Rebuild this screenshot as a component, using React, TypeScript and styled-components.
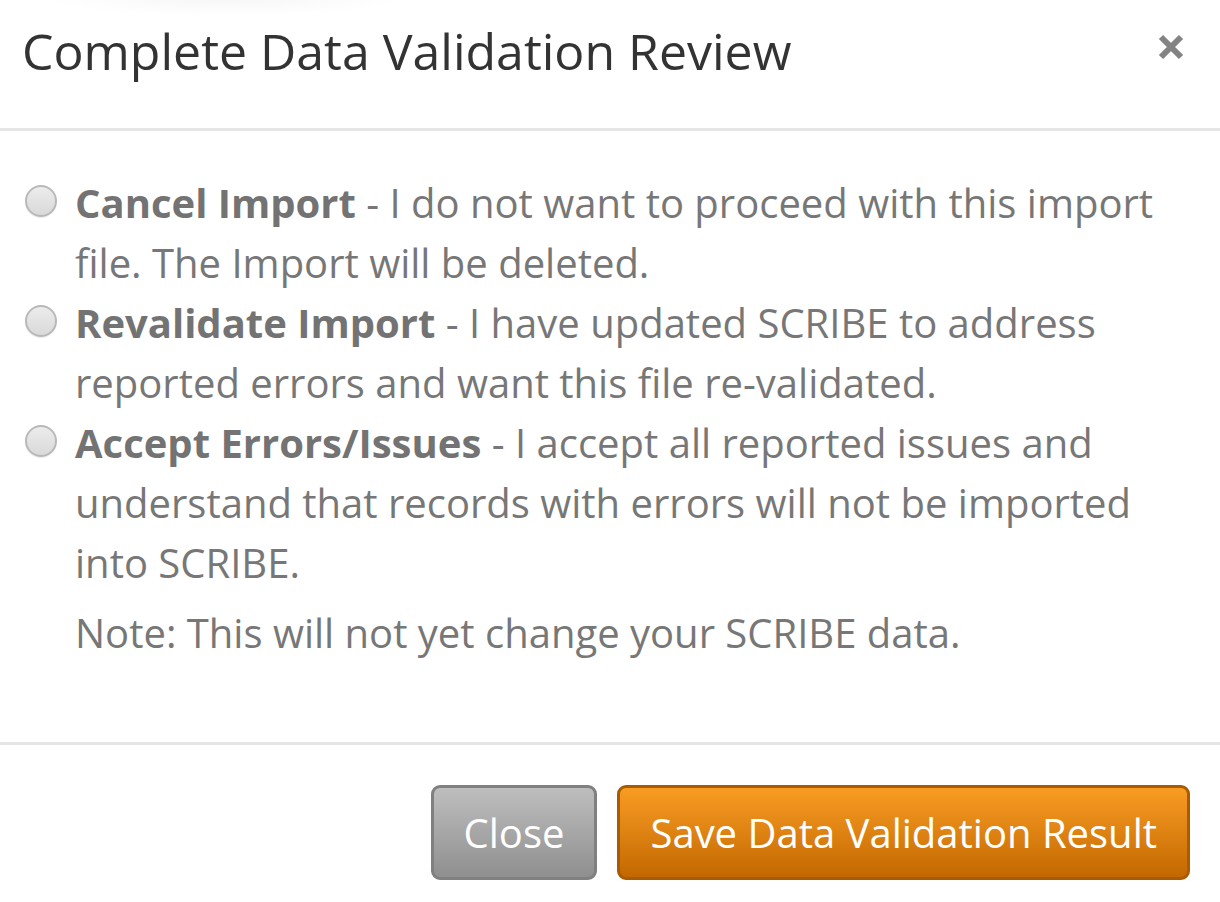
import React from 'react';
import styled, { createGlobalStyle } from 'styled-components';

const GlobalStyle = createGlobalStyle`
  html, body {
    margin: 0;
    padding: 0;
    background: #ffffff;
  }
  body {
    font-family: "Open Sans", "Liberation Sans", Arial, sans-serif;
    overflow: hidden;
  }
`;

const Modal = styled.div`
  width: 1220px;
  height: 902px;
  background: #fff;
  display: flex;
  flex-direction: column;
`;

// header with the title and the close cross
const Header = styled.div`
  position: relative;
  display: flex;
  justify-content: space-between;
  align-items: flex-start;
  padding: 24px 35px 49px 22px;
  border-bottom: 3px solid #e5e5e5;
  &:before {
    content: '';
    position: absolute;
    left: 40px;
    top: -20px;
    width: 370px;
    height: 36px;
    border-radius: 50%;
    background: radial-gradient(ellipse at center, rgba(0, 0, 0, 0.035) 0%, rgba(0, 0, 0, 0) 70%);
  }
`;

const Title = styled.h4`
  margin: 0;
  font-size: 50px;
  line-height: 55px;
  font-weight: 400;
  color: #333;
`;

const CloseX = styled.button`
  border: 0;
  background: transparent;
  padding: 0;
  margin-top: 9px;
  width: 28px;
  height: 28px;
  cursor: pointer;
  color: #838383;
`;

const Body = styled.div`
  padding: 42px 45px 79px 22px;
`;

const RadioRow = styled.label`
  display: flex;
  align-items: flex-start;
  font-size: 40px;
  line-height: 60px;
  color: #777;
  cursor: pointer;
`;

const Radio = styled.input`
  appearance: none;
  flex: none;
  box-sizing: border-box;
  width: 32px;
  height: 32px;
  margin: 12px 18px 0 3px;
  border-radius: 50%;
  border: 2px solid #b9b9b9;
  background: linear-gradient(#ececec, #d9d9d9);
  box-shadow: 0 1px 1px rgba(0, 0, 0, 0.08);
`;

const RadioText = styled.span`
  flex: 1;
  b {
    font-weight: 700;
    color: #737373;
  }
`;

const Note = styled.p`
  margin: 10px 0 0 53px;
  font-size: 40px;
  line-height: 60px;
  color: #777;
`;

const Footer = styled.div`
  display: flex;
  justify-content: flex-end;
  gap: 20px;
  padding: 40px 30px 0 0;
  border-top: 3px solid #e5e5e5;
`;

const Btn = styled.button<{ $kind: 'grey' | 'orange' }>`
  box-sizing: border-box;
  height: 95px;
  padding: 0 30px;
  border-radius: 9px;
  border: 3px solid ${p => (p.$kind === 'grey' ? '#808080' : '#a95b00')};
  background: ${p =>
    p.$kind === 'grey'
      ? 'linear-gradient(#bebebe, #8f8f8f)'
      : 'linear-gradient(#f99c24, #c36800)'};
  color: #fff;
  font-family: "Open Sans", "Liberation Sans", Arial, sans-serif;
  font-size: 40px;
  line-height: 60px;
  cursor: pointer;
`;

const options = [
  {
    title: 'Cancel Import',
    text: 'I do not want to proceed with this import file. The Import will be deleted.',
  },
  {
    title: 'Revalidate Import',
    text: 'I have updated SCRIBE to address reported errors and want this file re-validated.',
  },
  {
    title: 'Accept Errors/Issues',
    text: 'I accept all reported issues and understand that records with errors will not be imported into SCRIBE.',
  },
];

export default function App() {
  return (
    <>
      <GlobalStyle />
      <Modal>
        <Header>
          <Title>Complete Data Validation Review</Title>
          <CloseX aria-label="Close">
            <svg width="28" height="28" viewBox="0 0 28 28">
              <path d="M4 4 L24 24 M24 4 L4 24" stroke="currentColor" strokeWidth="6" strokeLinecap="butt" />
            </svg>
          </CloseX>
        </Header>
        <Body>
          {options.map(o => (
            <RadioRow key={o.title}>
              <Radio type="radio" name="validation" />
              <RadioText>
                <b>{o.title}</b> - {o.text}
              </RadioText>
            </RadioRow>
          ))}
          <Note>Note: This will not yet change your SCRIBE data.</Note>
        </Body>
        <Footer>
          <Btn $kind="grey">Close</Btn>
          <Btn $kind="orange">Save Data Validation Result</Btn>
        </Footer>
      </Modal>
    </>
  );
}
